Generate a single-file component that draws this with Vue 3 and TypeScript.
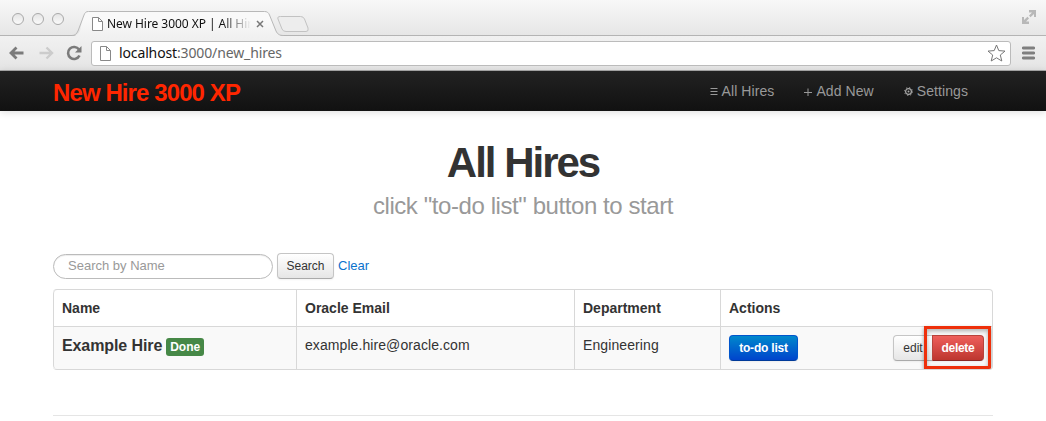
<script setup lang="ts">
import { ref } from 'vue'

interface Hire {
  name: string
  status: string
  email: string
  department: string
}

const query = ref<string>('')
const columns: string[] = ['Name', 'Oracle Email', 'Department', 'Actions']
const hires: Hire[] = [
  { name: 'Example Hire', status: 'Done', email: 'example.hire@oracle.com', department: 'Engineering' },
]
</script>

<template>
  <div class="window">
    <header class="tabstrip">
      <div class="lights"><i></i><i></i><i></i></div>
      <div class="tab">
        <svg class="tab-shape" width="246" height="36" viewBox="0 0 246 36">
          <defs>
            <linearGradient id="tabfill" x1="0" y1="0" x2="0" y2="1">
              <stop offset="0.3" stop-color="#f9f9f9" />
              <stop offset="1" stop-color="#f1f1f1" />
            </linearGradient>
          </defs>
          <path d="M0 36C5 35.500 6.500 34 8 31L11.500 15C12.500 12.500 13.500 11.500 16 11.500H192.500C195 11.500 196.500 12.500 197.500 15L204 31C205.500 34 207 35.500 212 36Z" fill="url(#tabfill)" />
          <path d="M0 35.500C3 35.500 4.500 34 6 31L12 15C13 12.500 14 11.500 16.500 11.500H192.500C195 11.500 196.500 12.500 197.500 15L204 31C205.500 34 207 35.500 212 35.500" fill="none" stroke="#b8b8b8" />
          <path d="M208.500 16.500H228.500Q231.500 16.500 232.500 19L236 28Q237 31.500 234 31.500H214Q211 31.500 210 29L206 19Q205 16.500 208.500 16.500Z" fill="#ededed" stroke="#c2c2c2" />
        </svg>
        <div class="tab-content">
          <svg width="11" height="14" viewBox="0 0 11 14"><path d="M.5 .5H6.500L10.500 4.500V13.500H.5ZM6.500 .5V4.500H10.500" fill="#fff" stroke="#888" /></svg>
          <span class="tab-title">New Hire 3000 XP | All Hires</span>
          <svg class="close" width="8" height="8" viewBox="0 0 8 8"><path d="M1 1L7 7M7 1L1 7" stroke="#777" stroke-width="1.500" /></svg>
        </div>
      </div>
      <svg class="expand" width="16" height="16" viewBox="0 0 16 16"><path d="M8 1H15V8H13V5L9.500 8.300L8 6.500L11 3.500H8ZM1 8H3V11L6.500 7.700L8 9.500L5 12.500H8V15H1Z" fill="#b8b8b8" /></svg>
    </header>
    <div class="toolbar">
      <svg width="16" height="14" viewBox="0 0 16 14"><path d="M7.500 1.500L2 7L7.500 12.500M2 7H14.500" fill="none" stroke="#7b7b7b" stroke-width="2.800" /></svg>
      <svg class="forward" width="16" height="14" viewBox="0 0 16 14"><path d="M8.500 1.500L14 7L8.500 12.500M14 7H1.500" fill="none" stroke="#ccc" stroke-width="2.400" /></svg>
      <svg class="reload" width="16" height="16" viewBox="0 0 16 16"><path d="M13 4.500A6 6 0 1 0 13.500 10.500" fill="none" stroke="#7b7b7b" stroke-width="2.600" /><path d="M15.500 1V7.500H9Z" fill="#7b7b7b" /></svg>
      <div class="address">
        <svg width="11" height="15" viewBox="0 0 11 15"><path d="M.5 .5H6.500L10.500 4.500V14.500H.5ZM6.500 .5V4.500H10.500" fill="#fff" stroke="#888" /></svg>
        <span class="url">localhost<span>:3000/new_hires</span></span>
        <svg class="star" width="19" height="18" viewBox="0 0 19 18"><path d="M9.500 1L11.800 6.600L18 7.100L13.300 11L14.800 17L9.500 13.800L4.200 17L5.700 11L1 7.100L7.200 6.600Z" fill="#fff" stroke="#777" stroke-linejoin="round" /></svg>
      </div>
      <svg class="menu" width="13" height="14" viewBox="0 0 13 14"><path d="M1.300 2H11.700M1.300 7H11.700M1.300 12H11.700" stroke="#7f7f7f" stroke-width="2.800" stroke-linecap="round" /></svg>
    </div>

    <nav class="navbar">
      <a class="brand">New Hire 3000 XP</a>
      <div class="links">
        <a><svg width="8" height="9" viewBox="0 0 8 9"><path d="M.5 1.500H7.500M.5 4.500H7.500M.5 7.500H7.500" stroke="#999" /></svg><span>All Hires</span></a>
        <a><svg width="8" height="9" viewBox="0 0 8 9"><path d="M0 5.500H8M4 1.500V9" stroke="#999" /></svg><span>Add New</span></a>
        <a><svg width="9" height="9" viewBox="0 0 9 9"><circle cx="4.500" cy="4.500" r="2.900" fill="none" stroke="#aaa" stroke-width="1.200" /><circle cx="4.500" cy="4.500" r="4" fill="none" stroke="#999" stroke-dasharray="1.300 1.842" /><circle cx="4.500" cy="4.500" r="1" fill="#aaa" /></svg><span>Settings</span></a>
      </div>
    </nav>

    <main class="page">
      <h1>All Hires</h1>
      <h2>click "to-do list" button to start</h2>
      <form class="search" @submit.prevent>
        <input v-model="query" type="text" placeholder="Search by Name" />
        <button class="btn search-btn" type="submit">Search</button>
        <a class="clear" @click="query = ''">Clear</a>
      </form>
      <div class="table">
        <div class="row head">
          <div v-for="c in columns" :key="c" class="cell"><span>{{ c }}</span></div>
        </div>
        <div v-for="h in hires" :key="h.email" class="row body">
          <div class="cell"><strong>{{ h.name }}</strong><em>{{ h.status }}</em></div>
          <div class="cell"><span class="email">{{ h.email }}</span></div>
          <div class="cell"><span class="dept">{{ h.department }}</span></div>
          <div class="cell actions">
            <button class="btn primary">to-do list</button>
            <div class="group">
              <button class="btn edit">edit</button>
              <button class="btn danger">delete</button>
              <div class="highlight"></div>
            </div>
          </div>
        </div>
      </div>
      <hr />
    </main>
  </div>
</template>

<style>
body { margin: 0; background: #fff; overflow: hidden; }
</style>

<style scoped>
* { box-sizing: border-box; }
.window { width: 1046px; height: 421px; overflow: hidden; background: #fff; font-family: "Liberation Sans", Arial, sans-serif; font-size: 14px; color: #333; }
svg { display: block; flex: none; }
span, a, button, h1, h2, strong, em { white-space: nowrap; }
.tabstrip { display: flex; height: 36px; background: linear-gradient(#f8f8f8, #e6e6e6); border-bottom: 1px solid #b4b4b4; }
.lights { display: flex; gap: 8px; padding: 13px 0 0 12px; width: 72px; }
.lights i { width: 12px; height: 12px; border: 1px solid #a9a9a9; border-radius: 50%; background: linear-gradient(#e5e5e5, #fafafa); }
.tab { position: relative; width: 246px; height: 36px; }
.tab-shape { position: absolute; left: 0; top: 0; }
.tab-content { position: relative; display: flex; align-items: center; padding: 17px 0 0 20px; height: 31px; }
.tab-title { width: 144px; margin-left: 4px; overflow: hidden; font: 12px/16px "Lucida Grande", "Noto Sans", sans-serif; letter-spacing: -0.05px; color: #111; -webkit-mask-image: linear-gradient(90deg, #000 80%, transparent 100%); mask-image: linear-gradient(90deg, #000 80%, transparent 100%); }
.close { margin-left: 5px; }
.expand { margin: 9px 9px 0 auto; }
.toolbar { display: flex; align-items: center; height: 35px; padding: 0 11px 0 10px; background: linear-gradient(#f1f1f1, #e5e5e5); border-bottom: 1px solid #aaa; }
.toolbar > svg:first-child { margin-left: -1px; }
.forward { margin-left: 13px; }
.reload { margin-left: 12px; }
.address { display: flex; align-items: center; width: 920px; height: 25px; margin-left: 9px; padding: 0 4px 0 8px; background: #fff; border: 1px solid #bbb; border-radius: 3px; }
.url { margin-left: 8px; font: 14px/22px "Noto Sans", sans-serif; letter-spacing: -0.13px; color: #111; }
.url span { color: #666; }
.star { margin-left: auto; }
.menu { margin-left: auto; }
.navbar { display: flex; justify-content: space-between; height: 40px; padding: 0 78px 0 53px; background: linear-gradient(#222, #111); box-shadow: 0 1px 8px rgba(0, 0, 0, 0.15); }
.brand { font-size: 24px; font-weight: bold; line-height: 43px; letter-spacing: -0.9px; color: #ff2600; }
.links { display: flex; gap: 30px; color: #999; line-height: 40px; }
.links a { display: flex; align-items: center; gap: 4px; }
.links span { letter-spacing: 0.08px; }
.page { display: flex; flex-direction: column; width: 940px; margin: 0 auto; }
h1 { margin: 32px 0 0; text-align: center; font-size: 42px; line-height: 40px; letter-spacing: -2px; }
h2 { margin: 3px 0 0; text-align: center; font-size: 24px; line-height: 40px; font-weight: normal; letter-spacing: -0.42px; color: #999; }
.search { display: flex; align-items: center; height: 28px; margin-top: 26px; }
input { width: 220px; height: 25px; padding: 0 14px 1px; border: 1px solid #bbb; border-radius: 13px; outline: 0; font: 13px "Liberation Sans", sans-serif; background: #fff; box-shadow: inset 0 1px 1px rgba(0, 0, 0, 0.075); }
input::placeholder { color: #999; opacity: 1; }
.btn { height: 26px; padding: 0; border: 1px solid #c5c5c5; border-bottom-color: #aaa; border-radius: 4px; background: linear-gradient(#fff, #e6e6e6); font: 12px/22px "Liberation Sans", sans-serif; color: #333; text-align: center; box-shadow: 0 1px 2px rgba(0, 0, 0, 0.05); }
.search-btn { width: 57px; margin-left: 4px; }
.clear { margin: -2px 0 0 4px; font-size: 13px; color: #0a72cc; }
.table { margin-top: 9px; border: 1px solid #d8d8d8; border-left: 0; border-radius: 4px; overflow: hidden; height: 81px; }
.row { display: grid; grid-template-columns: 243px 278px 146px 1fr; }
.cell { border-left: 1px solid #d8d8d8; padding-left: 8px; }
.cell:first-child { border-top-left-radius: 4px; }
.body .cell:first-child { border-radius: 0 0 0 4px; }
.head { height: 36px; line-height: 37px; font-weight: bold; }
.body { height: 43px; border-top: 1px solid #d8d8d8; background: #f9f9f9; line-height: 37px; }
.body .cell:first-child { display: flex; align-items: flex-start; }
.email { letter-spacing: 0.08px; }
.dept { letter-spacing: 0.1px; }
strong { font-size: 16px; letter-spacing: -0.1px; }
em { height: 18px; margin: 11px 0 0 4px; padding: 0 4px; border-radius: 3px; background: #468847; color: #fff; font: bold 12px/18px "Liberation Sans", sans-serif; }
.actions { display: flex; justify-content: space-between; padding: 8px 8px 0 8px; }
.primary { width: 69px; color: #fff; border-color: #0055cc #0055cc #003a99; background: linear-gradient(#0088cc, #0044cc); font-weight: bold; letter-spacing: -0.2px; }
.group { position: relative; display: flex; width: 91px; height: 26px; }
.edit { width: 40px; border-radius: 4px 0 0 4px; }
.danger { width: 52px; margin-left: -1px; color: #fff; border-color: #b9443c #b9443c #8c2a25; border-radius: 0 4px 4px 0; background: linear-gradient(#ee5f5b, #bd362f); font-weight: bold; letter-spacing: -0.3px; }
.highlight { position: absolute; left: 31px; top: -9px; width: 67px; height: 43px; border: 3px solid #ee2f0a; box-shadow: 0 2px 4px rgba(0, 0, 0, 0.4), inset 0 2px 4px rgba(0, 0, 0, 0.3); }
hr { width: 100%; height: 1px; margin: 45px 0 0; border: 0; background: #e5e5e5; }
</style>
